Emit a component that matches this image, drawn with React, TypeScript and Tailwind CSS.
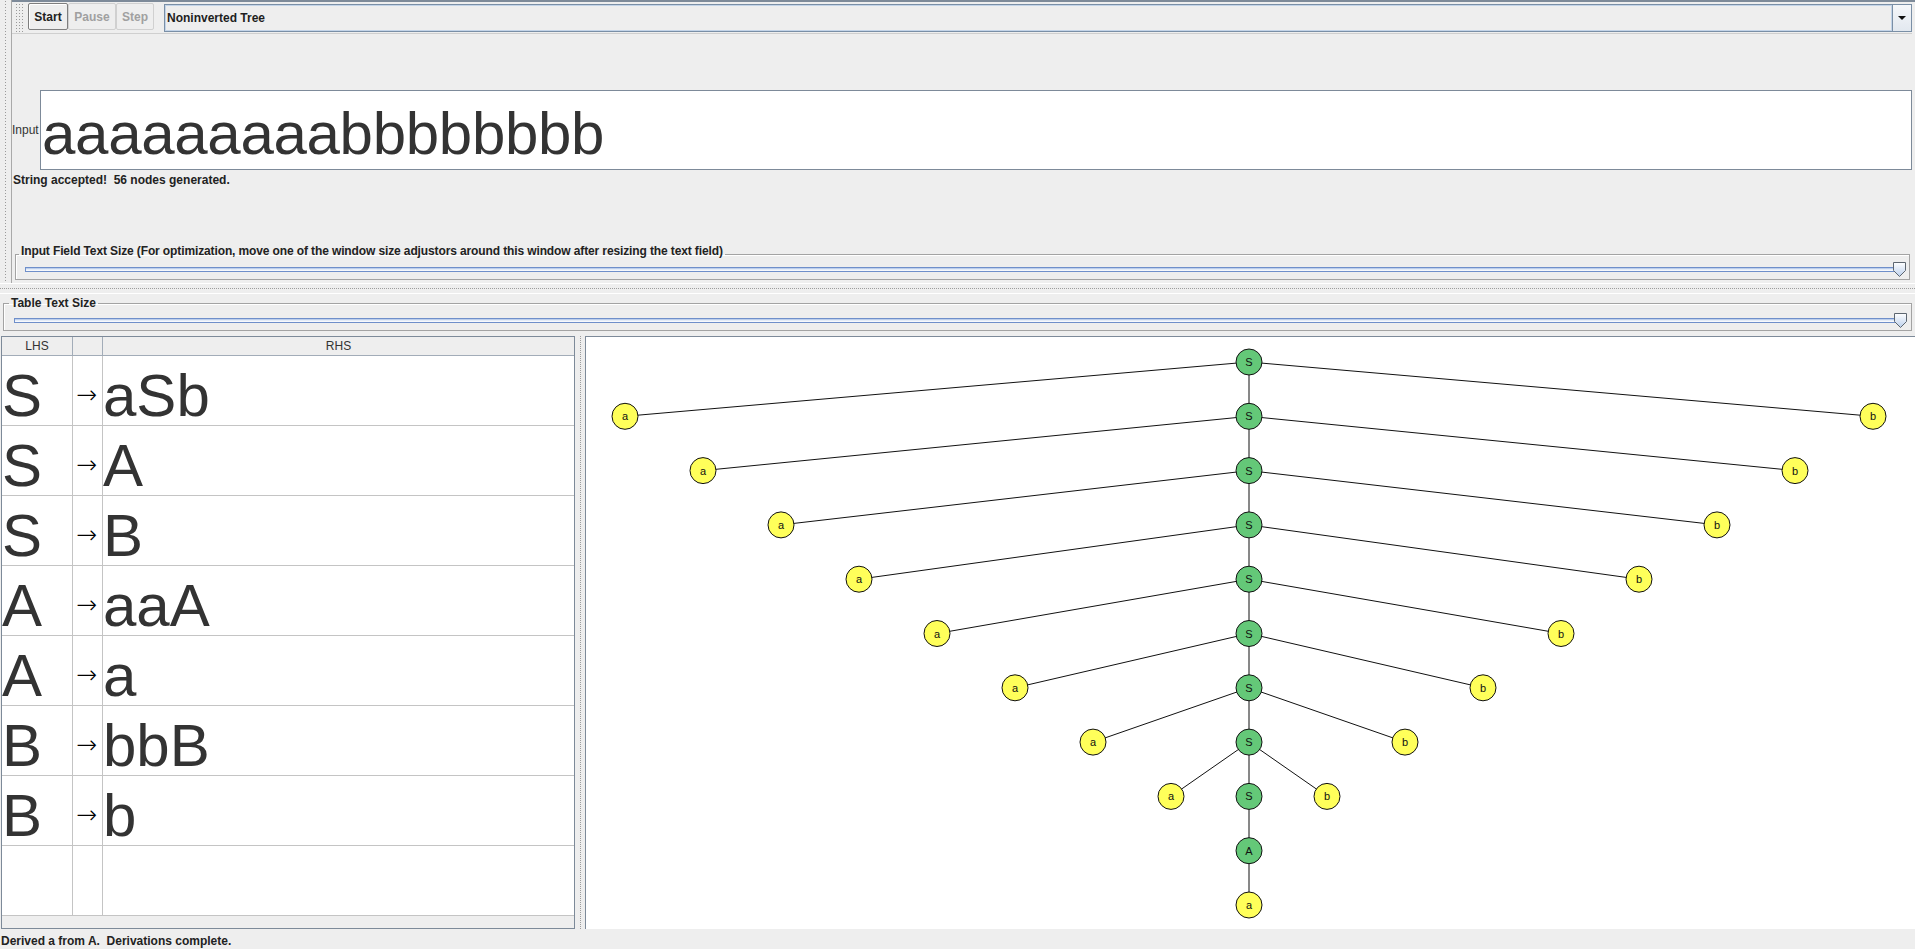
import React from "react";

const RULES = [
  { lhs: "S", rhs: "aSb" },
  { lhs: "S", rhs: "A" },
  { lhs: "S", rhs: "B" },
  { lhs: "A", rhs: "aaA" },
  { lhs: "A", rhs: "a" },
  { lhs: "B", rhs: "bbB" },
  { lhs: "B", rhs: "b" },
  { lhs: "", rhs: "" },
];

const GREEN = "#64c878";
const YELLOW = "#ffff5a";

type TreeNode = { id: string; x: number; y: number; label: string; leaf: boolean };
type Edge = [number, number, number, number];

// S -> aSb eight times, then S -> A -> a. Same layout the applet draws.
function buildTree() {
  const cx = 663;
  const y0 = 25;
  const dy = 54.3;
  const dx = 78;
  const nodes: TreeNode[] = [];
  const edges: Edge[] = [];
  for (let k = 0; k <= 8; k++) {
    const y = y0 + k * dy;
    nodes.push({ id: `s${k}`, x: cx, y, label: "S", leaf: false });
    if (k < 8) {
      const cy = y + dy;
      const off = dx * (8 - k);
      edges.push([cx, y, cx - off, cy], [cx, y, cx, cy], [cx, y, cx + off, cy]);
      nodes.push({ id: `a${k}`, x: cx - off, y: cy, label: "a", leaf: true });
      nodes.push({ id: `b${k}`, x: cx + off, y: cy, label: "b", leaf: true });
    }
  }
  const yS8 = y0 + 8 * dy;
  edges.push([cx, yS8, cx, yS8 + dy], [cx, yS8 + dy, cx, yS8 + 2 * dy]);
  nodes.push({ id: "A", x: cx, y: yS8 + dy, label: "A", leaf: false });
  nodes.push({ id: "aEnd", x: cx, y: yS8 + 2 * dy, label: "a", leaf: true });
  return { nodes, edges };
}

function Slider({ gid, className }: { gid: string; className: string }) {
  return (
    <div className={`relative h-[15px] ${className}`}>
      <div className="pt-[5px] pr-[4px]">
        <div className="h-[5px] border border-[#6f8fca] bg-[linear-gradient(to_bottom,#a9c0e6,#e4ecf8,#ffffff)]" />
      </div>
      <svg width="15" height="16" viewBox="0 0 15 16" className="absolute right-0 top-0">
        <defs>
          <linearGradient id={gid} x1="0" y1="0" x2="0" y2="1">
            <stop offset="0" stopColor="#ffffff" />
            <stop offset="1" stopColor="#bcd0ec" />
          </linearGradient>
        </defs>
        <path d="M1.5 0.5H13.5V8.5L7.5 14.5L1.5 8.5Z" fill={`url(#${gid})`} stroke="#5d6670" />
      </svg>
    </div>
  );
}

export default function App() {
  const tree = buildTree();
  return (
    <div className="w-[1915px] h-[949px] overflow-hidden bg-[#eeeeee] flex flex-col font-['Liberation_Sans',Arial,sans-serif] text-[#333333]">
      {/* upper panel */}
      <div className="h-[283px] flex">
        <div className="w-[12px] flex justify-center border-r border-[#a9a9a9]">
          <div className="w-[3px] h-full bg-[radial-gradient(circle,#9a9a9a_0.7px,transparent_1px)] bg-size-[3px_3px]" />
        </div>
        <div className="flex-1 flex flex-col border-t-2 border-[#7d8a99] pr-[3px]">
          {/* toolbar */}
          <div className="h-[32px] flex items-start border-b border-[#cfcfcf]">
            <div className="ml-[3px] mt-[1px] w-[9px] h-[29px] bg-[radial-gradient(circle,#9a9a9a_0.7px,transparent_1px)] bg-size-[3px_3px]" />
            <div className="ml-[4px] mt-[1px] flex">
              <button
                type="button"
                className="w-[40px] h-[27px] border border-[#7e7e7e] rounded-[2px] bg-[#eeeeee] shadow-[inset_1px_1px_0_#ffffff] text-[12px] font-bold text-[#222222]"
              >
                Start
              </button>
              <button
                type="button"
                className="w-[48px] h-[27px] border border-[#d0d0d0] rounded-[2px] bg-[#eeeeee] text-[12px] font-bold text-[#a0a0a0]"
              >
                Pause
              </button>
              <button
                type="button"
                className="w-[38px] h-[27px] border border-[#d0d0d0] rounded-[2px] bg-[#eeeeee] text-[12px] font-bold text-[#a0a0a0]"
              >
                Step
              </button>
            </div>
            <div className="ml-[10px] mt-[2px] h-[28px] flex-1 flex border border-[#7a8fa6] bg-[#eeeeee]">
              <div className="flex-1 flex items-center pl-[1px] border border-[#c3d4e8] text-[12px] font-bold text-[#1e1e1e]">
                Noninverted Tree
              </div>
              <div className="w-[19px] border-l border-[#7a8fa6] flex items-center justify-center bg-[linear-gradient(to_bottom,#f5f7fa,#e2e8ef)]">
                <svg width="8" height="4" viewBox="0 0 8 4">
                  <path d="M0 0H8L4 4Z" fill="#111111" />
                </svg>
              </div>
            </div>
          </div>

          {/* input row */}
          <div className="mt-[56px] flex items-center">
            <div className="w-[28px] text-[12px] leading-[14px]">Input</div>
            <div className="flex-1 h-[80px] border border-[#7d8a99] bg-white pl-[1px] pt-[13px] text-[60px] leading-[60px] tracking-[-0.3px] text-[#333333] whitespace-nowrap">
              aaaaaaaaabbbbbbbb
            </div>
          </div>
          <div className="mt-[3px] pl-[1px] text-[12px] leading-[14px] font-bold text-[#222222] whitespace-pre">
            String accepted!  56 nodes generated.
          </div>

          <fieldset className="mt-[57px] ml-[3px] mr-[2px] border border-[#a3a3a3] shadow-[inset_1px_1px_0_#ffffff] pb-[2px]">
            <legend className="ml-[3px] px-[2px] pb-[6px] text-[12px] leading-[14px] tracking-[-0.12px] font-bold text-[#222222]">
              Input Field Text Size (For optimization, move one of the window size adjustors around this window after resizing the text field)
            </legend>
            <Slider gid="thumbA" className="-mt-[2px] ml-[9px] mr-[2px]" />
          </fieldset>
        </div>
      </div>

      {/* split divider */}
      <div className="h-[11px] border-t border-white border-b border-[#b5b5b5] flex items-center">
        <div className="w-full border-t border-dotted border-[#9c9c9c]" />
      </div>

      {/* table text size */}
      <fieldset className="mt-[2px] ml-[3px] mr-[3px] border border-[#a3a3a3] shadow-[inset_1px_1px_0_#ffffff] pb-[2px]">
        <legend className="ml-[5px] px-[2px] text-[12px] leading-[14px] font-bold text-[#222222]">Table Text Size</legend>
        <Slider gid="thumbB" className="mt-[3px] ml-[10px] mr-[3px]" />
      </fieldset>

      {/* grammar table + parse tree */}
      <div className="mt-[5px] h-[593px] flex">
        <div className="ml-[1px] w-[574px] border border-[#7d8a99] flex flex-col bg-white">
          <div className="h-[19px] flex border-b border-[#a2acb8] bg-[#eeeeee] text-[12px] leading-[18px] text-[#333333]">
            <div className="w-[71px] border-r border-[#a2acb8] text-center">LHS</div>
            <div className="w-[30px] border-r border-[#a2acb8]" />
            <div className="flex-1 text-center">RHS</div>
          </div>
          {RULES.map((r, i) => (
            <div key={i} className="h-[70px] flex border-b border-[#c4c4c4]">
              <div className="w-[71px] border-r border-[#c4c4c4] pt-[10px] text-[60px] leading-[60px]">{r.lhs}</div>
              <div className="w-[30px] border-r border-[#c4c4c4] pt-[27px] pl-[3px] font-['DejaVu_Sans',sans-serif] text-[25px] leading-[24px] font-light text-black">
                {r.lhs ? "→" : ""}
              </div>
              <div className="flex-1 pt-[10px] text-[60px] leading-[60px]">{r.rhs}</div>
            </div>
          ))}
          <div className="flex-1 bg-[#eeeeee]" />
        </div>

        <div className="w-[10px] flex justify-center">
          <div className="h-full border-l border-dotted border-[#9c9c9c]" />
        </div>

        <div className="flex-1 border-l border-t border-[#7d8a99] bg-white">
          <svg width="1329" height="592" viewBox="0 0 1329 592">
            {tree.edges.map(([x1, y1, x2, y2], i) => (
              <line key={i} x1={x1} y1={y1} x2={x2} y2={y2} stroke="#111111" strokeWidth="1" />
            ))}
            {tree.nodes.map((n) => (
              <g key={n.id}>
                <circle cx={n.x} cy={n.y} r="13" fill={n.leaf ? YELLOW : GREEN} stroke="#111111" strokeWidth="1" />
                <text
                  x={n.x}
                  y={n.y + 4}
                  textAnchor="middle"
                  fontSize="11"
                  fontFamily="Liberation Sans, Arial, sans-serif"
                  fill="#111111"
                >
                  {n.label}
                </text>
              </g>
            ))}
          </svg>
        </div>
      </div>

      {/* status line */}
      <div className="h-[19px] pt-[5px] pl-[1px] text-[12px] leading-[14px] font-bold text-[#222222] whitespace-pre">
        Derived a from A.  Derivations complete.
      </div>
    </div>
  );
}
